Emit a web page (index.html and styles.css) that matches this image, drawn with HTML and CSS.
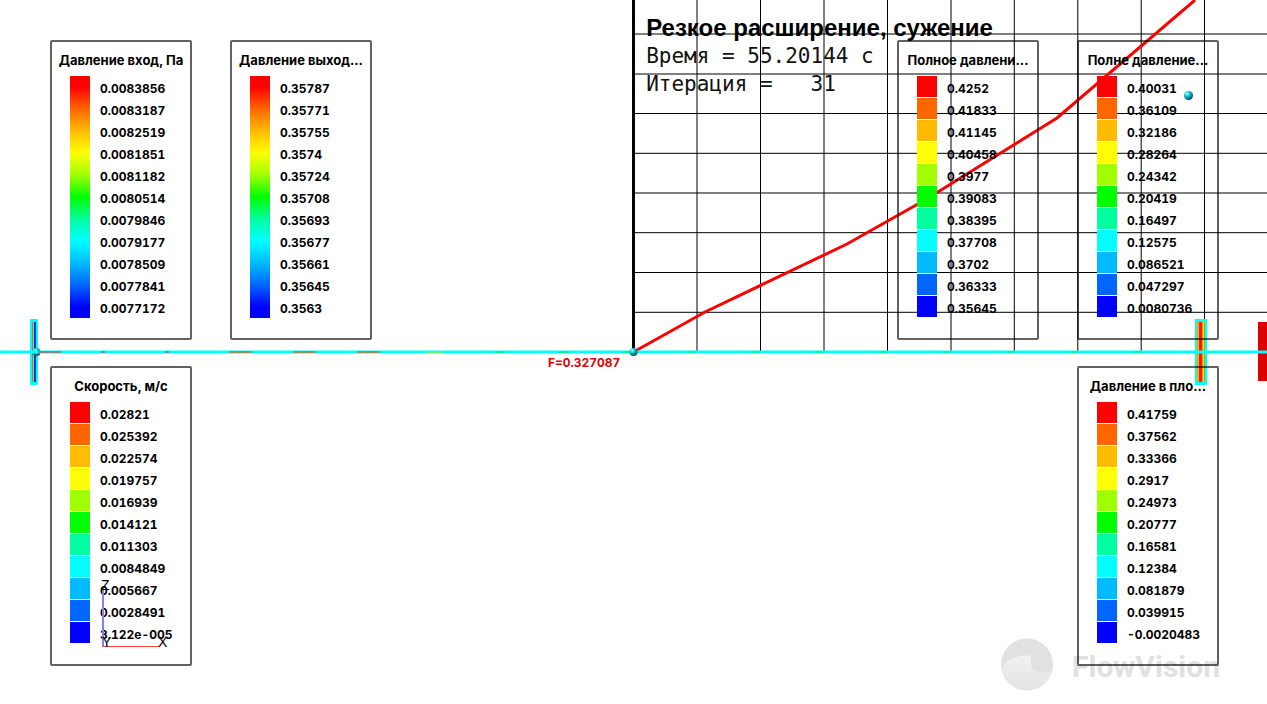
FILE: index.html
```html
<!DOCTYPE html>
<html lang="ru">
<head>
<meta charset="utf-8">
<title>FlowVision</title>
<link rel="stylesheet" href="styles.css">
</head>
<body>
<main class="viewport">
  <svg class="scene" viewBox="0 0 1267 704" aria-hidden="true">
    <defs>
      <radialGradient id="ball" cx="35%" cy="30%" r="70%">
        <stop offset="0" stop-color="#c8ffff"/>
        <stop offset=".35" stop-color="#10d8e0"/>
        <stop offset="1" stop-color="#064c54"/>
      </radialGradient>
      <linearGradient id="shade" x1="0" y1="0" x2="0" y2="1">
        <stop offset="0" stop-color="#f1f1f1"/>
        <stop offset="1" stop-color="#e4e4e4"/>
      </linearGradient>
    </defs>
    <path class="grid-line" d="M697 0V352M760.5 0V352M824 0V352M887.5 0V352M951 0V352M1014.3 0V352M1077.8 0V352M1141.2 0V352M1204.5 0V352"/>
    <path class="grid-line" d="M634 34H1267M634 74H1267M634 113.5H1267M634 153.3H1267M634 193H1267M634 232.7H1267M634 272.5H1267M634 312.3H1267"/>
    <path d="M633.5 0V352" stroke="#000" stroke-width="3"/>
    <path d="M633.5 352L705 312L847 244L925 200L1057 118L1195 0" fill="none" stroke="#ff0000" stroke-width="3"/>
    <rect x="30" y="319" width="8" height="66" rx="1" fill="#0ff"/>
    <path d="M32.5 322V382" stroke="#6a8a96"/>
    <path d="M33.5 322V382" stroke="#c8c832"/>
    <path d="M35 322V382" stroke="#0a32f0" stroke-width="2"/>
    <rect x="1195" y="319" width="12" height="66" fill="#0ff"/>
    <path d="M1197.5 322V382" stroke="#ffa000"/>
    <path d="M1198.500 322V382" stroke="#ffb400"/>
    <path d="M1203.500 322V382" stroke="#f0dc00"/>
    <path d="M1204.500 322V382" stroke="#64c83c"/>
    <path d="M1202.5 322V382" stroke="#ff9600"/>
    <path d="M1200.500 322V382" stroke="#ff1400" stroke-width="3"/>
    <rect x="1258" y="322" width="9" height="59" fill="#dc0000"/>
    <circle cx="36.500" cy="352" r="4" fill="url(#ball)"/>
    <path d="M0 352H1267" stroke="#0ff" stroke-width="3"/>
    <path d="M38 352H61M101 352H105M165 352H169" stroke="#7d8c8c" stroke-width="2"/>
    <path d="M229 352H252M293 352H316M357 352H380" stroke="#8c9664" stroke-width="2"/>
    <path d="M427 352H443" stroke="#64f078" stroke-width="2"/>
    <path d="M494 352H506M558 352H569M622 352H630M686 352H695M750 352H759M814 352H823M878 352H887M942 352H950M1006 352H1014M1069 352H1078M1133 352H1141" stroke="#00f5a0" stroke-width="2"/>
    <circle cx="633.5" cy="352" r="4" fill="url(#ball)"/>
    <circle cx="1188.5" cy="95.5" r="4.5" fill="url(#ball)"/>
    <text class="force" x="548" y="367">F=0.327087</text>
    <circle cx="1027" cy="664.5" r="26" fill="#e1e1e1"/>
    <path d="M1002 670C1005 660 1018 654 1031 656C1030.5 664 1031 671 1037 671.500L1052 671.500A26 26 0 0 1 1002 670Z" fill="url(#shade)"/>
    <text class="brand" x="1072" y="677">FlowVision</text>
  </svg>

  <header class="caption">
    <h1>Резкое расширение, сужение</h1>
    <p>Время = 55.20144 с</p>
    <p>Итерация =   31</p>
  </header>

  <div class="legends">
    <section class="legend smooth" aria-label="Давление вход">
      <h2>Давление вход, Па</h2>
      <ol><li>0.0083856</li><li>0.0083187</li><li>0.0082519</li><li>0.0081851</li><li>0.0081182</li><li>0.0080514</li><li>0.0079846</li><li>0.0079177</li><li>0.0078509</li><li>0.0077841</li><li>0.0077172</li></ol>
    </section>
    <section class="legend smooth" aria-label="Давление выход">
      <h2>Давление выход...</h2>
      <ol><li>0.35787</li><li>0.35771</li><li>0.35755</li><li>0.3574</li><li>0.35724</li><li>0.35708</li><li>0.35693</li><li>0.35677</li><li>0.35661</li><li>0.35645</li><li>0.3563</li></ol>
    </section>
    <section class="legend stepped push" aria-label="Полное давление">
      <h2>Полное давлени...</h2>
      <ol><li>0.4252</li><li>0.41833</li><li>0.41145</li><li>0.40458</li><li>0.3977</li><li>0.39083</li><li>0.38395</li><li>0.37708</li><li>0.3702</li><li>0.36333</li><li>0.35645</li></ol>
    </section>
    <section class="legend stepped" aria-label="Полне давление">
      <h2>Полне давление...</h2>
      <ol><li>0.40031</li><li>0.36109</li><li>0.32186</li><li>0.28264</li><li>0.24342</li><li>0.20419</li><li>0.16497</li><li>0.12575</li><li>0.086521</li><li>0.047297</li><li>0.0080736</li></ol>
    </section>
  </div>
  <div class="legends">
    <section class="legend stepped" aria-label="Скорость">
      <h2>Скорость, м/с</h2>
      <ol><li>0.02821</li><li>0.025392</li><li>0.022574</li><li>0.019757</li><li>0.016939</li><li>0.014121</li><li>0.011303</li><li>0.0084849</li><li>0.005667</li><li>0.0028491</li><li>3.122e-005</li></ol>
    </section>
    <section class="legend stepped push" aria-label="Давление в плоскости">
      <h2>Давление в пло...</h2>
      <ol><li>0.41759</li><li>0.37562</li><li>0.33366</li><li>0.2917</li><li>0.24973</li><li>0.20777</li><li>0.16581</li><li>0.12384</li><li>0.081879</li><li>0.039915</li><li>-0.0020483</li></ol>
    </section>
  </div>

  <svg class="scene" viewBox="0 0 1267 704" aria-hidden="true">
    <path d="M103 590V647" stroke="#8080ff" stroke-width="2"/>
    <path d="M103 646.5H160" stroke="#ff4040"/>
    <g class="axis">
      <text x="101" y="590">Z</text>
      <text x="102" y="647">Y</text>
      <text x="158" y="647">X</text>
    </g>
  </svg>
</main>
</body>
</html>
```
FILE: styles.css
```css
*, *::before { box-sizing: border-box; }

body {
  margin: 0;
  background: #fff;
  color: #000;
  font-family: Inter, "Liberation Sans", sans-serif;
}

.viewport {
  position: relative;
  min-height: 100vh;
  padding: 40px 48px 38px 50px;
  display: flex;
  flex-direction: column;
  gap: 26px;
  overflow: hidden;
}

.scene {
  position: absolute;
  inset: 0;
  width: 100%;
  height: 100%;
  pointer-events: none;
}

.grid-line { stroke: #000; stroke-width: 1; fill: none; }

.force {
  font: bold 12px Inter, sans-serif;
  font-variant-numeric: tabular-nums;
  fill: #e00000;
}
.brand { font: bold 30px Roboto, sans-serif; fill: #e1e1e1; }
.axis { font: 14px "Liberation Sans", sans-serif; }

.caption {
  position: absolute;
  top: 14px;
  left: 51%;
}

.caption h1 {
  margin: 0;
  font: bold 24px/28px "Liberation Sans", sans-serif;
}

.caption p {
  margin: 0;
  font: 21px/28px "DejaVu Sans Mono", monospace;
  color: #111;
  white-space: pre;
}

.legends {
  position: relative;
  display: flex;
  gap: 38px;
}

.legend {
  width: 142px;
  padding: 8px 0 20px;
  border: 2px solid rgba(0, 0, 0, 0.62);
  border-radius: 2px;
}

.push { margin-left: auto; }

.legend h2 {
  margin: 0 0 6px;
  font-size: 13px;
  line-height: 20px;
  font-weight: bold;
  text-align: center;
  white-space: nowrap;
}

.legend ol {
  margin: 0;
  padding: 0 0 0 18px;
  list-style: none;
}

.legend li {
  display: flex;
  gap: 10px;
  height: 22px;
  font-size: 12px;
  line-height: 26px;
  font-weight: bold;
  font-variant-numeric: tabular-nums;
}

.legend li::before {
  content: "";
  width: 20px;
  height: 22px;
}

.stepped li::before { border-bottom: 1px solid #fff; }

.smooth ol {
  background: linear-gradient(#f00 11px, #f60 33px, #fb0 55px, #ff0 77px, #a0ff00 99px, #0f0 121px, #00ffa0 143px, #0ff 165px, #0bf 187px, #06f 209px, #00f 231px) 18px 0 / 20px 100% no-repeat;
}

.stepped li:nth-child(1)::before { background: #f00; }
.stepped li:nth-child(2)::before { background: #f60; }
.stepped li:nth-child(3)::before { background: #fb0; }
.stepped li:nth-child(4)::before { background: #ff0; }
.stepped li:nth-child(5)::before { background: #a0ff00; }
.stepped li:nth-child(6)::before { background: #0f0; }
.stepped li:nth-child(7)::before { background: #00ffa0; }
.stepped li:nth-child(8)::before { background: #0ff; }
.stepped li:nth-child(9)::before { background: #0bf; }
.stepped li:nth-child(10)::before { background: #06f; }
.stepped li:nth-child(11)::before { background: #00f; }
```
